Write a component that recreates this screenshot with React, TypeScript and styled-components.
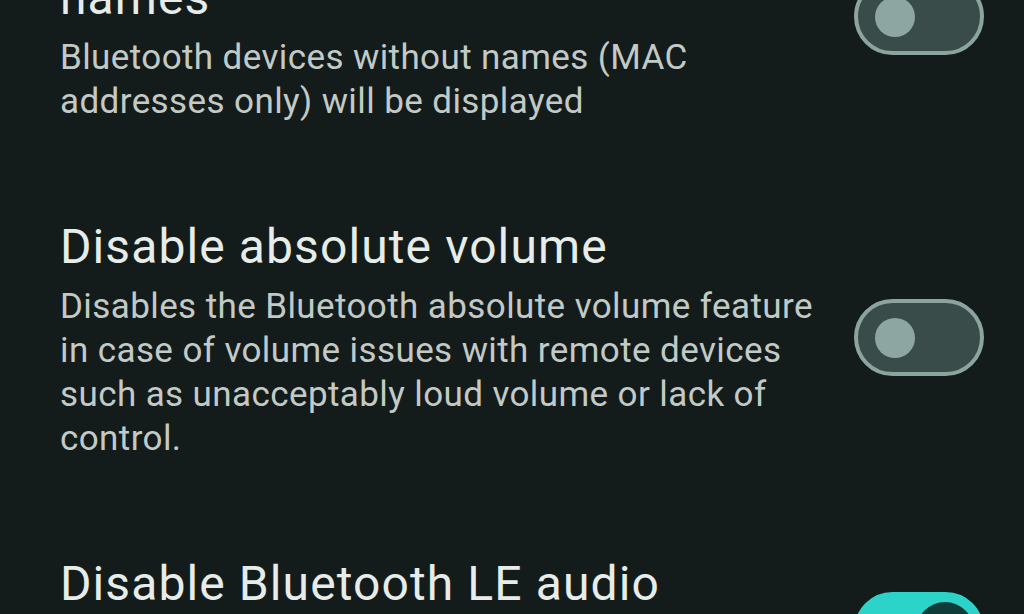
import React from 'react';
import styled, { createGlobalStyle } from 'styled-components';

const GlobalStyle = createGlobalStyle`
    html, body {
        margin: 0;
        padding: 0;
        background: #141c1b;
        overflow: hidden;
    }
`

const Screen = styled.div`
    width: 1024px;
    height: 614px;
    overflow: hidden;
    background: #141c1b;
    font-family: Roboto, "Noto Sans", sans-serif;
`

const List = styled.div`
    display: flex;
    flex-direction: column;
    margin-top: -86px;
    gap: 94px;
`

const Row = styled.div`
    display: flex;
    align-items: center;
    padding: 0 40px 0 60px;
`

const Texts = styled.div`
    flex: 1;
    display: flex;
    flex-direction: column;
`

const Title = styled.div`
    color: #e6ece9;
    font-size: 48px;
    line-height: 56px;
    letter-spacing: 1.1px;
    white-space: pre-line;
    margin-bottom: 10px;
`

const Summary = styled.div`
    color: #c2cac7;
    font-size: 35px;
    line-height: 44.3px;
    letter-spacing: 0.4px;
    white-space: pre-line;
`

const Track = styled.div<{ $on?: boolean }>`
    width: 130px;
    height: 77px;
    box-sizing: border-box;
    border-radius: 39px;
    border: 4px solid ${(p) => (p.$on ? '#2bd3c9' : '#8ca49f')};
    background: ${(p) => (p.$on ? '#2bd3c9' : '#3a4c49')};
    display: flex;
    align-items: center;
    justify-content: ${(p) => (p.$on ? 'flex-end' : 'flex-start')};
    padding: 0 ${(p) => (p.$on ? '6px' : '17px')};
    flex-shrink: 0;
    margin-top: -5px;
`

const Thumb = styled.div<{ $on?: boolean }>`
    width: ${(p) => (p.$on ? '58px' : '40px')};
    height: ${(p) => (p.$on ? '58px' : '40px')};
    border-radius: 50%;
    background: ${(p) => (p.$on ? '#0f3c39' : '#8ea6a1')};
`

type Setting = { title: string; summary: string; on?: boolean }

const settings: Setting[] = [
    {
        title: 'Show Bluetooth devices without\nnames',
        summary: 'Bluetooth devices without names (MAC\naddresses only) will be displayed',
    },
    {
        title: 'Disable absolute volume',
        summary:
            'Disables the Bluetooth absolute volume feature\nin case of volume issues with remote devices\nsuch as unacceptably loud volume or lack of\ncontrol.',
    },
    {
        title: 'Disable Bluetooth LE audio',
        summary: 'Disables Bluetooth LE audio feature if the\ndevice supports LE audio hardware capabilities.',
        on: true,
    },
]

const SettingRow = ({ setting }: { setting: Setting }) => (
    <Row>
        <Texts>
            <Title>{setting.title}</Title>
            <Summary>{setting.summary}</Summary>
        </Texts>
        <Track $on={setting.on}>
            <Thumb $on={setting.on} />
        </Track>
    </Row>
)

const App = () => (
    <Screen>
        <GlobalStyle />
        <List>
            {settings.map((s) => (
                <SettingRow key={s.title} setting={s} />
            ))}
        </List>
    </Screen>
)

export default App
